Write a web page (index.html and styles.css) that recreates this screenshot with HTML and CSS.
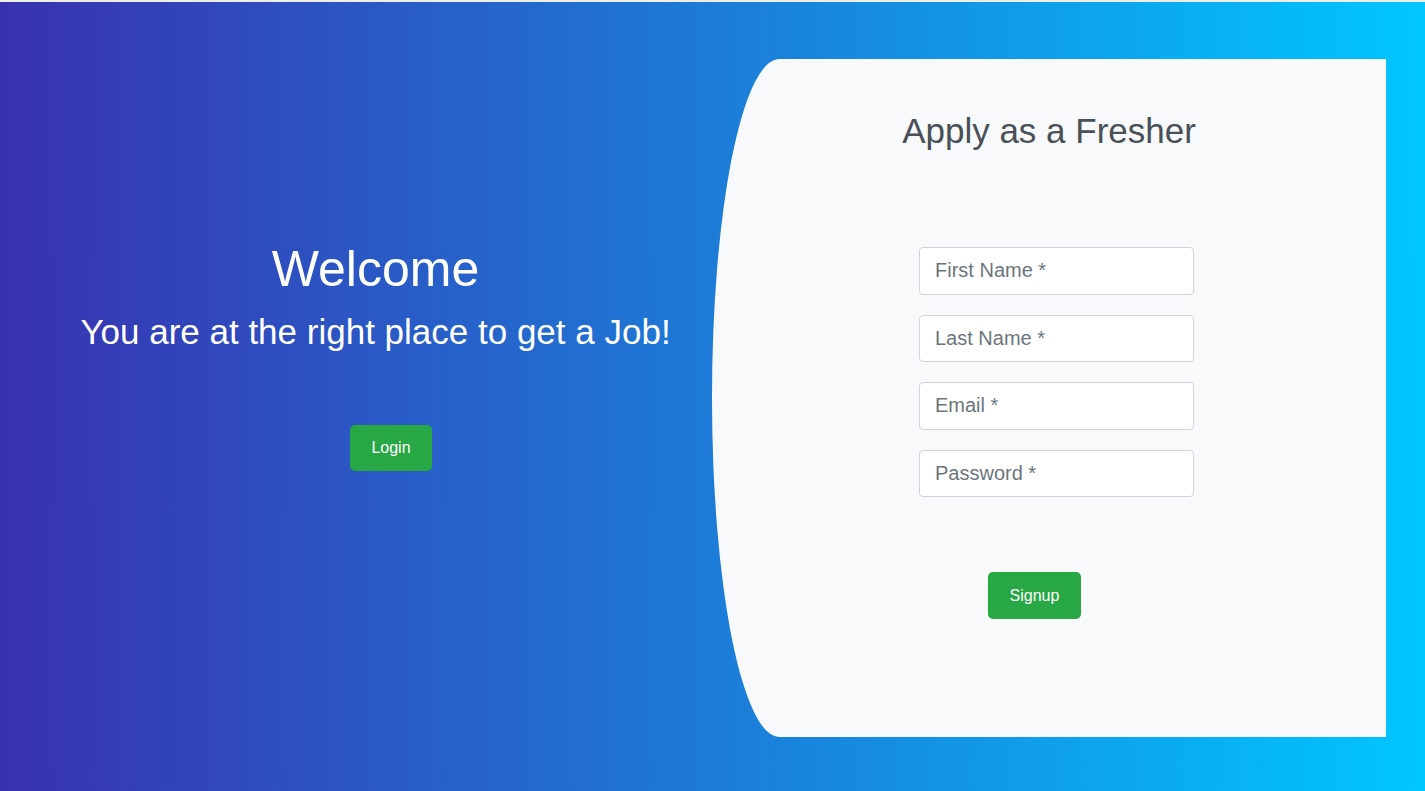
FILE: index.html
```html
<!DOCTYPE html>
<html lang="en">
<head>
<meta charset="utf-8">
<title>Register</title>
<link rel="stylesheet" href="styles.css">
</head>
<body>
<div class="register">
  <div class="register-left">
    <h1 class="welcome">Welcome</h1>
    <p class="tagline">You are at the right place to get a Job!</p>
    <button class="btn btn-login" type="button">Login</button>
  </div>
  <div class="register-right">
    <h3 class="register-heading">Apply as a Fresher</h3>
    <form class="register-form">
      <input class="form-control" type="text" placeholder="First Name *">
      <input class="form-control" type="text" placeholder="Last Name *">
      <input class="form-control" type="email" placeholder="Email *">
      <input class="form-control" type="password" placeholder="Password *">
      <button class="btn btn-signup" type="button">Signup</button>
    </form>
  </div>
</div>
</body>
</html>
```

FILE: styles.css
```css
* { box-sizing: border-box; }
html, body { margin: 0; padding: 0; }
body {
  background: #eeeeef;
  font-family: "Liberation Sans", Arial, sans-serif;
  padding-top: 2px;
}
.register {
  height: 789px;
  background: linear-gradient(to right, #3931af, #00c6ff);
  padding: 57px 39px 54px 39px;
  display: flex;
}
.register-left {
  flex: 0 0 673px;
  display: flex;
  flex-direction: column;
  align-items: center;
  color: #fff;
  text-align: center;
  padding-top: 180px;
}
.welcome {
  margin: 0;
  font-size: 50px;
  line-height: 60px;
  font-weight: 400;
}
.tagline {
  margin: 12px 0 0;
  font-size: 35px;
  line-height: 42px;
}
.btn {
  border: 0;
  border-radius: 5px;
  background: #28a745;
  color: #fff;
  font-family: "Liberation Sans", Arial, sans-serif;
  font-size: 16px;
  padding: 0 21.5px;
  cursor: pointer;
}
.btn-login {
  height: 46px;
  margin-top: 72px;
  margin-left: 31px;
}
.register-right {
  flex: 1;
  background: #f8f9fa;
  border-top-left-radius: 10% 50%;
  border-bottom-left-radius: 10% 50%;
  padding-top: 51px;
}
.register-heading {
  margin: 0;
  text-align: center;
  font-size: 35px;
  line-height: 42px;
  font-weight: 400;
  color: #495057;
}
.register-form {
  display: flex;
  flex-direction: column;
  align-items: flex-start;
  padding-left: 207px;
  margin-top: 95px;
}
.form-control {
  width: 275px;
  height: 47.5px;
  margin: 0 0 20px;
  padding: 0 15px;
  border: 1px solid #ced4da;
  border-radius: 4px;
  background: #fff;
  font-family: "Liberation Sans", Arial, sans-serif;
  font-size: 20px;
  color: #495057;
}
.form-control::placeholder { color: #6c757d; }
.btn-signup {
  height: 47px;
  margin-top: 55px;
  margin-left: 69px;
}
```
